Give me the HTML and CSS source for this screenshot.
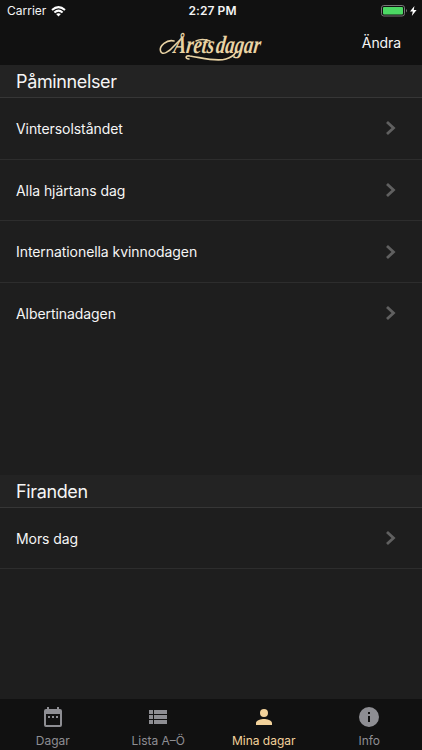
FILE: index.html
```html
<!DOCTYPE html>
<html lang="sv">
<head>
<meta charset="utf-8">
<title>Årets dagar</title>
<link rel="stylesheet" href="styles.css">
</head>
<body>
<div class="app">
  <header class="top">
    <div class="status">
      <div class="carrier"><span>Carrier</span>
        <svg width="15" height="11" viewBox="0 0 15 11"><g fill="none" stroke="#fff" stroke-width="2"><path d="M1 4Q7.5-1.8 14 4"/><path d="M3.4 6.5Q7.5 2.8 11.6 6.5"/></g><path fill="#fff" d="M5.1 8.1Q7.5 6.2 9.9 8.1L7.5 10.6Z"/></svg>
      </div>
      <span class="time">2:27 PM</span>
      <div class="power">
        <svg width="37" height="12" viewBox="0 0 37 12"><rect x=".5" y=".5" width="23" height="10.5" rx="2.3" fill="none" stroke="#777"/><rect x="2" y="2" width="20" height="7.5" rx="1" fill="#4cd964"/><path d="M25 4Q27 5.7 25 7.5Z" fill="#777"/><path fill="#fff" d="M33.4 1L29 6.6H31.8L30.8 11L35.6 4.9H32.8Z"/></svg>
      </div>
    </div>
    <div class="nav">
      <svg class="logo" width="104" height="38" viewBox="0 0 104 38">
        <text transform="translate(14 29) skewX(-7)" x="0" y="0" font-size="25" textLength="87" lengthAdjust="spacingAndGlyphs">Årets dagar</text>
        <path d="M15 17C8 15 0 22 1.500 27C3 32 10 28 15 22L21 16"/>
        <path d="M37 17Q43 14 51 17"/>
        <path d="M30 35C26 35 26 31 31 32C44 34 57 38 67 35Q74 33 77 28"/>
      </svg>
      <span class="edit">Ändra</span>
    </div>
  </header>
  <main>
    <section class="reminders">
      <h2>Påminnelser</h2>
      <ul>
        <li><span>Vintersolståndet</span><svg width="12" height="16" viewBox="0 0 12 16"><path d="M2 2L8.5 8L2 14"/></svg></li>
        <li><span>Alla hjärtans dag</span><svg width="12" height="16" viewBox="0 0 12 16"><path d="M2 2L8.5 8L2 14"/></svg></li>
        <li><span>Internationella kvinnodagen</span><svg width="12" height="16" viewBox="0 0 12 16"><path d="M2 2L8.5 8L2 14"/></svg></li>
        <li class="plain"><span>Albertinadagen</span><svg width="12" height="16" viewBox="0 0 12 16"><path d="M2 2L8.5 8L2 14"/></svg></li>
      </ul>
    </section>
    <section class="celebrations">
      <h2>Firanden</h2>
      <ul>
        <li><span>Mors dag</span><svg width="12" height="16" viewBox="0 0 12 16"><path d="M2 2L8.5 8L2 14"/></svg></li>
      </ul>
    </section>
  </main>
  <nav class="tabs">
    <div class="tab"><svg width="24" height="24" viewBox="0 0 24 24"><path fill-rule="evenodd" d="M5 4H6V2H8V4H16V2H18V4H19Q21 4 21 6V20Q21 22 19 22H5Q3 22 3 20V6Q3 4 5 4ZM5 9V20H19V9ZM7 11H9V13H7ZM11 11H13V13H11ZM15 11H17V13H15Z"/></svg><span>Dagar</span></div>
    <div class="tab"><svg width="24" height="24" viewBox="0 0 24 24"><path d="M3 5H7V9H3ZM8 5H21V9H8ZM3 10H7V14H3ZM8 10H21V14H8ZM3 15H7V19H3ZM8 15H21V19H8Z"/></svg><span>Lista A–Ö</span></div>
    <div class="tab active"><svg width="24" height="24" viewBox="0 0 24 24"><path d="M12 12a4 4 0 1 0 0-8 4 4 0 0 0 0 8zm0 2c-2.7 0-8 1.3-8 4v2h16v-2c0-2.7-5.3-4-8-4z"/></svg><span>Mina dagar</span></div>
    <div class="tab"><svg width="24" height="24" viewBox="0 0 24 24"><path d="M12 2a10 10 0 1 0 0 20 10 10 0 0 0 0-20zm1 15h-2v-6h2zm0-8h-2V7h2z"/></svg><span>Info</span></div>
  </nav>
</div>
</body>
</html>
```
FILE: styles.css
```css
* { box-sizing: border-box; }
body { margin: 0; background: #1e1e1e; color: #f5f5f5; font-family: Inter, "Liberation Sans", sans-serif; }
.app { width: 422px; height: 750px; display: flex; flex-direction: column; overflow: hidden; }
.top { height: 65px; background: #111; }
.status { height: 22px; display: grid; grid-template-columns: 1fr auto 1fr; align-items: center; padding: 0 4px 0 7px; font-size: 12px; line-height: 22px; }
.carrier { display: flex; align-items: center; gap: 5px; }
.time { font-weight: 600; letter-spacing: .1px; }
.power { display: flex; justify-content: flex-end; }
.nav { height: 43px; display: grid; grid-template-columns: 1fr 104px 1fr; }
.logo { grid-column: 2; margin-top: 2px; overflow: visible; font-family: "Liberation Serif", serif; font-style: italic; font-weight: bold; word-spacing: -4px; fill: #e9d3a4; }
.logo path { fill: none; stroke: #e9d3a4; stroke-width: 1.6; stroke-linecap: round; }
.edit { grid-column: 3; justify-self: end; padding-right: 21px; font-size: 14px; line-height: 42px; letter-spacing: -.1px; }
main { flex: 1; }
.reminders { height: 410px; }
h2 { height: 33px; margin: 0; padding-left: 16px; background: #232323; border-bottom: 1px solid #363636; font-size: 18px; line-height: 33px; font-weight: 400; letter-spacing: -.36px; }
ul { margin: 0; padding: 0; list-style: none; }
li { height: 61.7px; padding: 0 25px 0 16px; display: flex; align-items: center; justify-content: space-between; border-bottom: 1px solid #2d2d2d; font-size: 14px; letter-spacing: -.07px; }
.celebrations li { height: 61px; }
.plain { border-bottom-color: transparent; }
li svg { fill: none; stroke: #606060; stroke-width: 2.8; }
.tabs { height: 51px; background: #111; display: grid; grid-template-columns: repeat(4, 1fr); }
.tab { display: flex; flex-direction: column; align-items: center; padding-top: 6px; color: #8e8e93; font-size: 12px; line-height: 14px; }
.tab svg { fill: currentColor; margin-bottom: 5px; }
.active { color: #f3d29b; }
```
